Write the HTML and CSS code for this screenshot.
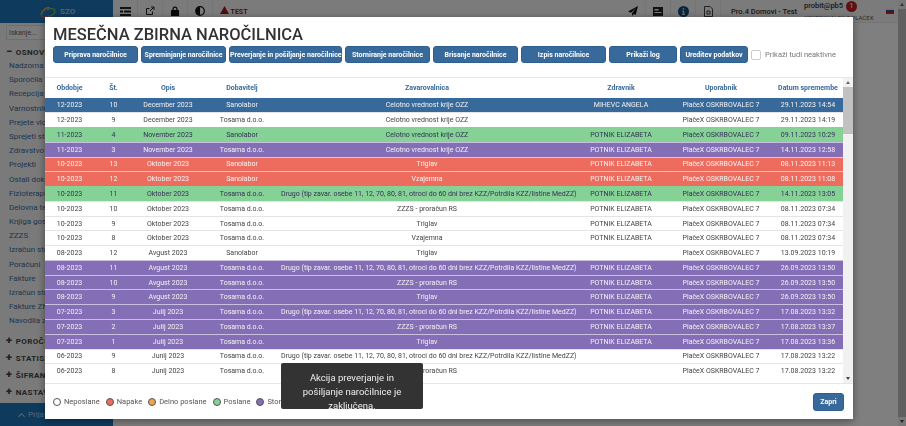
FILE: index.html
```html
<!DOCTYPE html>
<html lang="en">
<head>
    <meta charset="UTF-8">
    <title>Mesečna zbirna naročilnica</title>
    <link rel="stylesheet" href="styles.css">
</head>
<body>
    <div class="app">
        <aside class="sidebar">
            <div class="logo">
                <svg width="16" height="12" viewBox="0 0 16 12" fill="none"><path d="M1 9c2-6 6-8 9-7" stroke="#e8a33d" stroke-width="1.3"/><path d="M5 11c4 0 10-2 10-6 0-3-5-3-8-1" stroke="#7cc24a" stroke-width="1.3"/><path d="M1 9c0 3 6 3 9 0" stroke="#d9534f" stroke-width="1.3"/></svg>
                <span>SZO</span>
            </div>
            <div class="search">Iskanje...</div>
            <div class="menu-title"><b>&minus;</b> OSNOVNO</div>
            <ul class="menu">
                <li>Nadzorna plošča</li>
                <li>Sporočila</li>
                <li>Recepcija</li>
                <li>Varnostnik</li>
                <li>Prejete vloge</li>
                <li>Sprejeti stanovalci</li>
                <li>Zdravstvo</li>
                <li>Projekti</li>
                <li>Ostali dokumenti</li>
                <li>Fizioterapija</li>
                <li>Delovna terapija</li>
                <li>Knjiga gostov</li>
                <li>ZZZS</li>
                <li>Izračun stroškov</li>
                <li>Poračuni</li>
                <li>Fakture</li>
                <li>Izračun stroškov ZN</li>
                <li>Fakture ZN</li>
                <li>Navodila za uporabo</li>
            </ul>
            <div class="menu-title closed"><b>+</b> POROČILA</div>
            <div class="menu-title closed"><b>+</b> STATISTIKA</div>
            <div class="menu-title closed"><b>+</b> ŠIFRANTI</div>
            <div class="menu-title closed"><b>+</b> NASTAVITVE</div>
            <div class="login-bar"><span class="chevron"></span> Prijava</div>
        </aside>

        <div class="main">
            <header class="topbar">
                <div class="top-left">
                    <span class="top-icon"><svg width="11" height="9" viewBox="0 0 11 9" fill="#222"><path d="M0 0h11v2H0zM0 3.5h3v2H0zM4 3.5h7v2H4zM0 7h11v2H0z"/></svg></span>
                    <span class="top-icon"><svg width="10" height="10" viewBox="0 0 10 10" fill="none" stroke="#222" stroke-width="1"><path d="M7.5 5.5v3h-6v-6h3M5 5l4-4M6 1h3v3"/></svg></span>
                    <span class="top-icon"><svg width="8" height="10" viewBox="0 0 8 10" fill="#111"><path d="M1.5 4V3a2.5 2.500 0 0 1 5 0v1H8v6H0V4zM2.700 4h2.600V3a1.300 1.300 0 0 0-2.600 0z"/></svg></span>
                    <span class="top-icon"><svg width="10" height="10" viewBox="0 0 10 10"><circle cx="5" cy="5" r="4.300" fill="none" stroke="#111" stroke-width="1.200"/><path d="M5 1a4 4 0 0 0 0 8z" fill="#111"/></svg></span>
                    <span class="test"><svg width="9" height="8" viewBox="0 0 9 8" fill="#a01818"><path d="M4.500 0 9 8H0z"/></svg> TEST</span>
                </div>
                <div class="top-right">
                    <span class="top-icon"><svg width="10" height="10" viewBox="0 0 10 10" fill="#111"><path d="M10 0 0 5.500l3 1.200L8 2 4 7.300V10l1.700-2 2 1z"/></svg></span>
                    <span class="top-icon"><svg width="10" height="9" viewBox="0 0 10 9" fill="#222"><path d="M0 0h10v9H0zM1.500 2v1.500h4V2zM1.500 5v1h7V5z" fill-rule="evenodd"/></svg></span>
                    <span class="top-icon"><svg width="11" height="11" viewBox="0 0 11 11"><circle cx="5.500" cy="5.500" r="5.500" fill="#0d4a80"/><path d="M4.700 2h1.600v1.500H4.700zM4.200 4.500h2.100V8h.7v1H4V8h.7V5.500h-.5z" fill="#c8c8c8"/></svg></span>
                    <span class="top-icon"><svg width="9" height="11" viewBox="0 0 9 11" fill="none" stroke="#444"><path d="M.5.500h5.500l2.500 2.500v7.500h-8zM3 5h3v3H3z"/></svg></span>
                    <span class="home-name">Pro.4 Domovi - Test</span>
                    <div class="user">
                        <div class="user-name">probit@pb5 <span class="badge">1</span></div>
                        <div class="user-role">OSKRBOVALEC 7 PLAČEX</div>
                    </div>
                    <span class="flag"></span>
                </div>
            </header>
            <div class="content"></div>
        </div>
        <div class="page-scroll">
            <span class="arrow up"></span>
            <span class="page-thumb"></span>
            <span class="arrow down"></span>
        </div>
    </div>

    <div class="backdrop"></div>

    <div class="modal">
        <h1>MESEČNA ZBIRNA NAROČILNICA</h1>
        <div class="actions">
            <button class="btn w85">Priprava naročilnice</button>
            <button class="btn w85">Spreminjanje naročilnice</button>
            <button class="btn w113">Preverjanje in pošiljanje naročilnice</button>
            <button class="btn w85">Storniranje naročilnice</button>
            <button class="btn w85">Brisanje naročilnice</button>
            <button class="btn w85">Izpis naročilnice</button>
            <button class="btn w68">Prikaži log</button>
            <button class="btn w68">Ureditev podatkov</button>
            <label class="inactive"><span class="check"></span> Prikaži tudi neaktivne</label>
        </div>

        <div class="table-wrap">
            <table class="orders">
                <colgroup>
                    <col class="c-period"><col class="c-no"><col class="c-desc"><col class="c-supplier">
                    <col class="c-insurer"><col class="c-doctor"><col class="c-user"><col class="c-date">
                </colgroup>
                <thead>
                    <tr><th>Obdobje</th><th>Št.</th><th>Opis</th><th>Dobavitelj</th><th>Zavarovalnica</th><th>Zdravnik</th><th>Uporabnik</th><th>Datum spremembe</th></tr>
                </thead>
                <tbody>
                    <tr class="selected"><td>12-2023</td><td>10</td><td>December 2023</td><td>Sanolabor</td><td>Celotno vrednost krije OZZ</td><td>MIHEVC ANGELA</td><td>PlačeX OSKRBOVALEC 7</td><td>29.11.2023 14:54</td></tr>
                    <tr><td>12-2023</td><td>9</td><td>December 2023</td><td>Tosama d.o.o.</td><td>Celotno vrednost krije OZZ</td><td></td><td>PlačeX OSKRBOVALEC 7</td><td>29.11.2023 14:19</td></tr>
                    <tr class="sent"><td>11-2023</td><td>4</td><td>November 2023</td><td>Sanolabor</td><td>Celotno vrednost krije OZZ</td><td>POTNIK ELIZABETA</td><td>PlačeX OSKRBOVALEC 7</td><td>09.11.2023 10:29</td></tr>
                    <tr class="cancelled"><td>11-2023</td><td>3</td><td>November 2023</td><td>Tosama d.o.o.</td><td>Celotno vrednost krije OZZ</td><td>POTNIK ELIZABETA</td><td>PlačeX OSKRBOVALEC 7</td><td>14.11.2023 12:58</td></tr>
                    <tr class="error"><td>10-2023</td><td>13</td><td>Oktober 2023</td><td>Sanolabor</td><td>Triglav</td><td>POTNIK ELIZABETA</td><td>PlačeX OSKRBOVALEC 7</td><td>08.11.2023 11:13</td></tr>
                    <tr class="error"><td>10-2023</td><td>12</td><td>Oktober 2023</td><td>Sanolabor</td><td>Vzajemna</td><td>POTNIK ELIZABETA</td><td>PlačeX OSKRBOVALEC 7</td><td>08.11.2023 11:08</td></tr>
                    <tr class="sent"><td>10-2023</td><td>11</td><td>Oktober 2023</td><td>Tosama d.o.o.</td><td>Drugo (tip zavar. osebe 11, 12, 70, 80, 81, otroci do 60 dni brez KZZ/Potrdila KZZ/listine MedZZ)</td><td>POTNIK ELIZABETA</td><td>PlačeX OSKRBOVALEC 7</td><td>14.11.2023 13:05</td></tr>
                    <tr><td>10-2023</td><td>10</td><td>Oktober 2023</td><td>Tosama d.o.o.</td><td>ZZZS - proračun RS</td><td>POTNIK ELIZABETA</td><td>PlačeX OSKRBOVALEC 7</td><td>08.11.2023 07:34</td></tr>
                    <tr><td>10-2023</td><td>9</td><td>Oktober 2023</td><td>Tosama d.o.o.</td><td>Triglav</td><td>POTNIK ELIZABETA</td><td>PlačeX OSKRBOVALEC 7</td><td>08.11.2023 07:34</td></tr>
                    <tr><td>10-2023</td><td>8</td><td>Oktober 2023</td><td>Tosama d.o.o.</td><td>Vzajemna</td><td>POTNIK ELIZABETA</td><td>PlačeX OSKRBOVALEC 7</td><td>08.11.2023 07:34</td></tr>
                    <tr><td>08-2023</td><td>12</td><td>Avgust 2023</td><td>Sanolabor</td><td>Triglav</td><td></td><td>PlačeX OSKRBOVALEC 7</td><td>13.09.2023 10:19</td></tr>
                    <tr class="cancelled"><td>08-2023</td><td>11</td><td>Avgust 2023</td><td>Tosama d.o.o.</td><td>Drugo (tip zavar. osebe 11, 12, 70, 80, 81, otroci do 60 dni brez KZZ/Potrdila KZZ/listine MedZZ)</td><td>POTNIK ELIZABETA</td><td>PlačeX OSKRBOVALEC 7</td><td>26.09.2023 13:50</td></tr>
                    <tr class="cancelled"><td>08-2023</td><td>10</td><td>Avgust 2023</td><td>Tosama d.o.o.</td><td>ZZZS - proračun RS</td><td>POTNIK ELIZABETA</td><td>PlačeX OSKRBOVALEC 7</td><td>26.09.2023 13:50</td></tr>
                    <tr class="cancelled"><td>08-2023</td><td>9</td><td>Avgust 2023</td><td>Tosama d.o.o.</td><td>Triglav</td><td>POTNIK ELIZABETA</td><td>PlačeX OSKRBOVALEC 7</td><td>26.09.2023 13:50</td></tr>
                    <tr class="cancelled"><td>07-2023</td><td>3</td><td>Julij 2023</td><td>Tosama d.o.o.</td><td>Drugo (tip zavar. osebe 11, 12, 70, 80, 81, otroci do 60 dni brez KZZ/Potrdila KZZ/listine MedZZ)</td><td>POTNIK ELIZABETA</td><td>PlačeX OSKRBOVALEC 7</td><td>17.08.2023 13:32</td></tr>
                    <tr class="cancelled"><td>07-2023</td><td>2</td><td>Julij 2023</td><td>Tosama d.o.o.</td><td>ZZZS - proračun RS</td><td>POTNIK ELIZABETA</td><td>PlačeX OSKRBOVALEC 7</td><td>17.08.2023 13:37</td></tr>
                    <tr class="cancelled"><td>07-2023</td><td>1</td><td>Julij 2023</td><td>Tosama d.o.o.</td><td>Triglav</td><td>POTNIK ELIZABETA</td><td>PlačeX OSKRBOVALEC 7</td><td>17.08.2023 13:36</td></tr>
                    <tr><td>06-2023</td><td>9</td><td>Junij 2023</td><td>Tosama d.o.o.</td><td>Drugo (tip zavar. osebe 11, 12, 70, 80, 81, otroci do 60 dni brez KZZ/Potrdila KZZ/listine MedZZ)</td><td></td><td>PlačeX OSKRBOVALEC 7</td><td>17.08.2023 13:22</td></tr>
                    <tr><td>06-2023</td><td>8</td><td>Junij 2023</td><td>Tosama d.o.o.</td><td>ZZZS - proračun RS</td><td></td><td>PlačeX OSKRBOVALEC 7</td><td>17.08.2023 13:22</td></tr>
                </tbody>
            </table>
            <div class="table-scroll">
                <span class="arrow up"></span>
                <span class="table-thumb"></span>
                <span class="arrow down"></span>
            </div>
        </div>

        <div class="modal-footer">
            <div class="legend">
                <span class="key"><i class="dot d-none"></i>Neposlane</span>
                <span class="key"><i class="dot d-error"></i>Napake</span>
                <span class="key"><i class="dot d-partial"></i>Delno poslane</span>
                <span class="key"><i class="dot d-sent"></i>Poslane</span>
                <span class="key"><i class="dot d-cancelled"></i>Stornirane</span>
            </div>
            <button class="btn close">Zapri</button>
        </div>
    </div>

    <div class="toast">Akcija preverjanje in pošiljanje naročilnice je zaključena.</div>
</body>
</html>
```

FILE: styles.css
```css
* {
    box-sizing: border-box;
}

html, body {
    height: 100%;
    margin: 0;
    overflow: hidden;
}

body {
    font-family: Roboto, Arial, sans-serif;
    color: #333;
    background-color: #fff;
}

.app {
    display: flex;
    height: 426px;
}

/* sidebar */
.sidebar {
    position: relative;
    width: 113px;
    flex: none;
    background-color: #f4f4f4;
    overflow: hidden;
}

.logo {
    height: 23px;
    background-color: #1c75bc;
    display: flex;
    align-items: center;
    padding-left: 40px;
    gap: 4px;
    color: #aac4dd;
    font-size: 8px;
    font-weight: 700;
}

.search {
    margin: 2px 6px 0;
    height: 15px;
    line-height: 15px;
    padding-left: 2px;
    font-size: 7px;
    color: #666;
    border: 1px solid #ddd;
    background-color: #f8f8f8;
}

.menu-title {
    margin-top: 4px;
    padding-left: 6px;
    height: 15px;
    line-height: 15px;
    font-size: 8px;
    font-weight: 700;
    letter-spacing: .4px;
    color: #444;
    white-space: nowrap;
}

.menu-title b {
    font-size: 11px;
    margin-right: 1px;
}

.menu-title.closed {
    margin-top: 2px;
}

.menu {
    list-style: none;
    margin: 0 0 4px;
    padding: 0 0 0 9px;
    font-size: 8px;
    color: #3d6da0;
}

.menu li {
    height: 14.2px;
    line-height: 14.2px;
    white-space: nowrap;
}

.login-bar {
    position: absolute;
    left: 0;
    right: 0;
    bottom: 0;
    height: 23px;
    padding-left: 19px;
    display: flex;
    align-items: center;
    gap: 4px;
    background-color: #1c75bc;
    color: #bcd;
    font-size: 8px;
}

.chevron {
    width: 5px;
    height: 5px;
    margin-top: 3px;
    border-left: 1px solid #bcd;
    border-top: 1px solid #bcd;
    transform: rotate(45deg);
}

/* top bar */
.main {
    flex: 1;
    min-width: 0;
    display: flex;
    flex-direction: column;
}

.topbar {
    height: 23px;
    display: flex;
    justify-content: space-between;
    background-color: #f6f6f6;
    border-bottom: 1px solid #e6e6e6;
}

.top-left, .top-right {
    display: flex;
    align-items: center;
}

.top-icon {
    width: 25px;
    height: 100%;
    display: flex;
    align-items: center;
    justify-content: center;
    border-right: 1px solid #e9e9e9;
}

.test {
    padding-left: 7px;
    font-size: 7px;
    font-weight: 700;
    color: #a01818;
}

.home-name {
    width: 83px;
    padding-left: 10px;
    font-size: 7.500px;
    font-weight: 500;
    white-space: nowrap;
}

.user {
    width: 83px;
    padding-left: 0;
    white-space: nowrap;
}

.user-name {
    font-size: 7.500px;
    font-weight: 500;
    height: 11px;
}

.user-role {
    font-size: 6px;
    color: #555;
    margin-top: 2px;
}

.badge {
    display: inline-block;
    width: 11px;
    height: 11px;
    margin-left: 1px;
    border-radius: 50%;
    background-color: #c02020;
    color: #eee;
    font-size: 7px;
    line-height: 11px;
    text-align: center;
}

.flag {
    width: 8px;
    height: 6px;
    margin-left: -1px;
    margin-right: 4px;
    background: linear-gradient(#eee 33%, #2b4ea0 33% 66%, #c22 66%);
}

.content {
    flex: 1;
    background-color: #fff;
}

/* page scrollbar */
.page-scroll {
    width: 8px;
    flex: none;
    display: flex;
    flex-direction: column;
    align-items: center;
    background-color: #f1f1f1;
}

.page-thumb {
    width: 100%;
    flex: 1;
    background-color: #c1c1c1;
}

.arrow {
    flex: none;
    width: 0;
    height: 0;
    margin: 3px 0;
    border-left: 2.500px solid transparent;
    border-right: 2.500px solid transparent;
}

.arrow.up {
    border-bottom: 3px solid #666;
}

.arrow.down {
    border-top: 3px solid #444;
}

/* dim layer */
.backdrop {
    position: fixed;
    inset: 0 0 0 0;
    background-color: rgba(0, 0, 0, .5);
}

/* modal */
.modal {
    position: fixed;
    left: 45px;
    top: 17px;
    width: 808px;
    height: 402px;
    display: flex;
    flex-direction: column;
    background-color: #fff;
    box-shadow: 0 2px 8px rgba(0, 0, 0, .4);
}

h1 {
    margin: 9px 0 0 8px;
    height: 18px;
    line-height: 18px;
    font-size: 16.500px;
    font-weight: 500;
    color: #333;
}

.actions {
    display: flex;
    align-items: center;
    gap: 3px;
    margin: 2px 0 0 8px;
}

.btn {
    height: 17px;
    padding: 0;
    font-family: inherit;
    font-size: 7px;
    font-weight: 700;
    color: #fff;
    background-color: #376a9b;
    border: 1px solid #2e5f8e;
    border-radius: 3px;
    white-space: nowrap;
}

.w85 { width: 85px; }
.w113 { width: 113px; }
.w68 { width: 68px; }

.inactive {
    display: flex;
    align-items: center;
    gap: 4px;
    margin-left: 0;
    font-size: 7.500px;
    color: #777;
    white-space: nowrap;
}

.check {
    width: 10px;
    height: 10px;
    border: 1px solid #ccc;
    border-radius: 2px;
}

.table-wrap {
    position: relative;
    margin-top: 14px;
    height: 307px;
    padding-right: 10px;
    overflow: hidden;
    border-top: 1px solid #e6e6e6;
    border-bottom: 1px solid #e6e6e6;
}

.orders {
    width: 798px;
    table-layout: fixed;
    border-collapse: collapse;
    font-size: 7px;
}

.c-period { width: 49px; }
.c-no { width: 39px; }
.c-desc { width: 70px; }
.c-supplier { width: 78px; }
.c-insurer { width: 292px; }
.c-doctor { width: 96px; }
.c-user { width: 104px; }
.c-date { width: 70px; }

.orders th {
    height: 20px;
    padding: 0;
    font-size: 7px;
    font-weight: 700;
    color: #376a9b;
    white-space: nowrap;
}

.orders td {
    height: 14.780px;
    padding: 0;
    text-align: center;
    color: #444;
    white-space: nowrap;
    border-top: 1px solid #e4e4e4;
}

.orders tr.selected td {
    background-color: #376a9b;
    color: #f2f2f2;
    border-top-color: #376a9b;
}

.orders tr.sent td {
    background-color: #85d196;
    border-top-color: #85d196;
    color: #335;
}

.orders tr.cancelled td {
    background-color: #846fb6;
    border-top-color: #c9c0e0;
    color: #f2f2f2;
}

.orders tr.error td {
    background-color: #ee6c5e;
    border-top-color: #f7c0b8;
    color: #f5f5f5;
}

.table-scroll {
    position: absolute;
    top: 0;
    right: 0;
    bottom: 0;
    width: 10px;
    display: flex;
    flex-direction: column;
    align-items: center;
    background-color: #f1f1f1;
}

.table-thumb {
    width: 100%;
    height: 47px;
    background-color: #c1c1c1;
}

.table-scroll .arrow.down {
    margin-top: auto;
}

.modal-footer {
    flex: 1;
    display: flex;
    align-items: center;
    justify-content: space-between;
    padding: 0 9px 0 8px;
}

.legend {
    display: flex;
    gap: 6px;
    font-size: 7.500px;
    color: #555;
}

.key {
    display: flex;
    align-items: center;
    gap: 3px;
}

.dot {
    width: 8px;
    height: 8px;
    border-radius: 50%;
    border: 1px solid #555;
}

.d-none { background-color: #fff; }
.d-error { background-color: #ee6c5e; }
.d-partial { background-color: #eda64f; }
.d-sent { background-color: #85d196; }
.d-cancelled { background-color: #846fb6; }

.close {
    width: 31px;
    height: 18px;
}

/* toast */
.toast {
    position: fixed;
    left: 281px;
    top: 363px;
    width: 142px;
    height: 46px;
    padding: 8px 16px;
    text-align: center;
    font-size: 9.500px;
    line-height: 14px;
    color: #eee;
    background-color: #333;
    border-radius: 2px;
}
```
